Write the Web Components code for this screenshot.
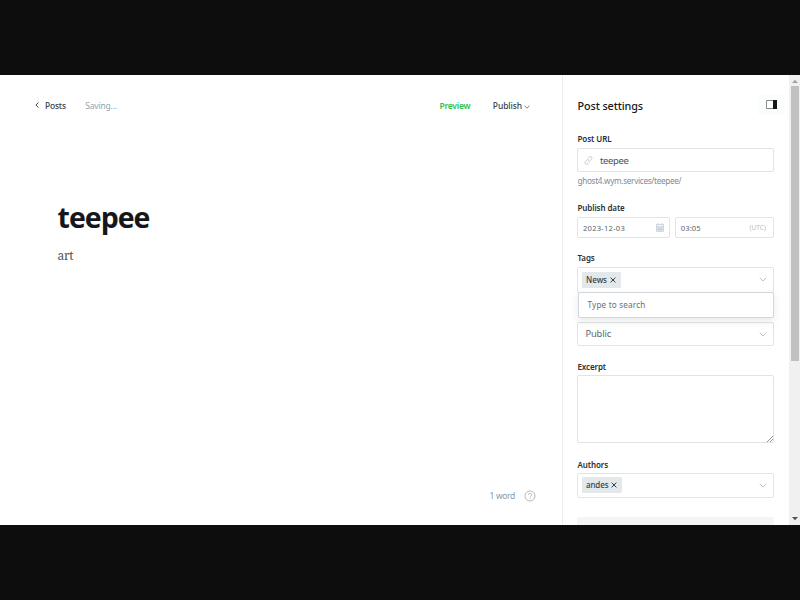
<!DOCTYPE html>
<html lang="en">
<head>
<meta charset="utf-8">
<title>Post editor</title>
<style>
html,body{margin:0;height:100%;background:#0d0d0d;overflow:hidden}
body{font-family:"Noto Sans","Open Sans",sans-serif;color:#394047}
</style>
</head>
<body>
<post-editor></post-editor>
<script>
const define = (name, html, Base = HTMLElement) => {
  const t = document.createElement('template');
  t.innerHTML = html;
  customElements.define(name, class extends Base {
    constructor() {
      super();
      this.attachShadow({mode: 'open'}).append(t.content.cloneNode(true));
    }
  });
};

/* Text run whose letter spacing is tuned so that it fills a given width. */
class FitText extends HTMLElement {
  connectedCallback() {
    if (this.shadowRoot) return;
    this.attachShadow({mode: 'open'}).innerHTML =
      '<style>:host{display:inline-block;white-space:nowrap;flex:none}span{display:inline-block}</style><span><slot></slot></span>';
    const w = Number(this.getAttribute('width'));
    const span = this.shadowRoot.querySelector('span');
    const natural = span.getBoundingClientRect().width;
    const n = this.textContent.length;
    if (natural && w) {
      span.style.letterSpacing = ((w - natural) / n) + 'px';
      this.style.width = w + 'px';
    }
  }
}

define('chevron-icon', `<style>:host{display:block;width:8px;height:5px;color:#b9c1c9}svg{display:block;width:100%;height:100%}</style>
<svg viewBox="0 0 8 5" fill="none" stroke="currentColor" stroke-width="1"><path d="M.8.7 4 4.1 7.2.7"/></svg>`);

define('form-label', `<style>:host{display:block;height:16px;font-size:8px;line-height:14px;font-weight:600;color:#2a2f35}</style><slot></slot>`);

define('input-box', `<style>
:host{display:flex;align-items:center;box-sizing:border-box;border:1px solid #e1e4e6;border-radius:2px;background:#fff;color:#4a525a;position:relative}
.grow{flex:1}
</style><slot></slot><div class="grow"></div><slot name="end"></slot>`);

define('token-chip', `<style>
:host{display:flex;align-items:center;gap:2.5px;box-sizing:border-box;height:16px;padding:0 5px 0 4px;background:#e3e8eb;border-radius:1.5px;font-size:8px;line-height:14px;font-weight:500;color:#394047}
svg{width:6px;height:6px;flex:none}
</style><slot></slot><svg viewBox="0 0 6 6" stroke="#394047" stroke-width="1"><path d="m.6.6 4.8 4.8m0-4.8L.6 5.4"/></svg>`);

define('scroll-bar', `<style>
:host{display:flex;flex-direction:column;align-items:center;width:11px;background:#f0f0f0}
svg{width:6px;height:4px;margin-top:4px}
.thumb{width:8px;height:275px;background:#c1c1c1;margin:3px 0 auto 1px}
svg:last-child{margin:0 0 4px}
</style><svg viewBox="0 0 6 4"><path d="M0 4 3 .7 6 4z" fill="#a3a3a3"/></svg><div class="thumb"></div><svg viewBox="0 0 6 4"><path d="M0 0h6L3 3.3z" fill="#505050"/></svg>`);

define('editor-canvas', `<style>
:host{display:flex;flex-direction:column;box-sizing:border-box;width:562px;height:450px;background:#fff;padding:20px 25px 20px 35px}
header{display:flex;align-items:center;height:21px;font-size:8.5px;color:#394047}
header svg{width:4px;height:6px;margin-right:6px;margin-top:-1px}
.saving{margin-left:19.5px;color:#95a1ad}
.preview{margin-left:auto;color:#2fbf55;font-weight:600}
.publish{margin-left:22.5px;font-weight:500}
header chevron-icon{width:6px;height:4px;margin:3px 7px 0 2px;color:#505961}
h1{margin:81px 0 0 22.5px;font:700 28.5px/40px "Open Sans","Noto Sans",sans-serif;color:#15171a}
p{margin:9px 0 0 22.5px;font:12px/20px "Noto Serif","Liberation Serif",serif;color:#4a525a}
footer{display:flex;align-items:center;justify-content:flex-end;margin-top:auto;height:19px;font-size:8.5px;color:#8b98a6}
footer svg{width:12px;height:12px;margin:0 1px 0 9px}
</style>
<header><svg viewBox="0 0 4 6" fill="none" stroke="#394047"><path d="M3.4.5.9 3l2.5 2.5"/></svg>
<fit-text width="20.8" style="font-weight:500">Posts</fit-text><fit-text class="saving" width="31.5">Saving...</fit-text>
<fit-text class="preview" width="30.8">Preview</fit-text><fit-text class="publish" width="29.2">Publish</fit-text><chevron-icon></chevron-icon></header>
<h1><fit-text width="92">teepee</fit-text></h1>
<p><fit-text width="15.5">art</fit-text></p>
<footer><fit-text width="25.5">1 word</fit-text><svg viewBox="0 0 12 12" fill="none" stroke="#9ba8b5" stroke-width=".8"><circle cx="6" cy="6" r="5"/><path d="M4.4 4.9a1.6 1.5 0 1 1 2.3 1.3Q6 6.5 6 7.2M6 8.1v.9"/></svg></footer>`);

define('settings-panel', `<style>
:host{display:flex;flex-direction:column;box-sizing:border-box;width:227px;height:450px;overflow:hidden;border-left:1px solid #eceeef;background:#fff;padding:20px 15px 0 14px}
header{display:flex;align-items:center;justify-content:space-between;height:20px;font-size:10.8px;color:#15171a;font-weight:500;padding-left:.5px;margin-right:-11px;flex:none}
.toggle{width:27px;height:20px;background:#fbfcfc;border-radius:2px;display:grid;place-items:center}
.toggle svg{width:11px;height:9px;margin-top:-1px}
form-label{padding-left:.5px;flex:none}
.url{height:24px;padding-left:6px;font-size:9.5px;flex:none}
.url svg{width:9px;height:9px;margin-right:7px}
.hint{font-size:8.2px;line-height:14px;height:14px;margin-top:2px;padding-left:.5px;color:#7c8b9a;flex:none}
.dates{display:flex;gap:5px;flex:none}
.dates input-box{height:21px;padding:0 5px;font-size:7.6px;color:#5b656f}
.date{width:93px}.time{width:99.5px}
.dates .utc{font-size:6.6px;color:#b8c0c8;margin-right:2px}
.cal{width:8px;height:9px;margin-right:-.5px}
.tokens{height:26px;padding:0 6px 0 4px;flex:none}
.tokens token-chip,.tokens chevron-icon{margin-top:-1px}
.list{position:absolute;left:0;right:-1px;top:24px;height:26px;box-sizing:border-box;border:1px solid #d2d7db;border-radius:2px;background:#fff;z-index:2;box-shadow:0 3px 10px rgba(0,0,0,.09);padding-left:8.5px;font-size:8.2px;line-height:24px;color:#656f79}
.select{height:24px;margin-top:29px;padding:0 6px 0 7.5px;font-size:9.3px;line-height:20px;color:#5d6771;flex:none}
.area{height:68px;flex:none}
.area svg{align-self:flex-end;width:6px;height:6px;margin:0}
.more{flex:none;height:12px;margin-top:19px;background:#f4f5f5;border-radius:2px 2px 0 0}
</style>
<header><fit-text width="65.5">Post settings</fit-text><div class="toggle"><svg viewBox="0 0 11 9"><path d="M.5.5h10v8H.5z" fill="#fff" stroke="#85898c"/><path d="M7 0h4v9H7z" fill="#15171a"/></svg></div></header>
<form-label style="margin-top:17px"><fit-text width="34">Post URL</fit-text></form-label>
<input-box class="url"><svg viewBox="0 0 9 9" fill="none" stroke="#b4bbc3" stroke-width=".75"><path d="m3.9 2.4 1.2-1.3a1.5 1.5 0 0 1 2.5 2L6.1 4.8a1.5 1.5 0 0 1-2 .2M5.1 6.6 3.9 7.8a1.5 1.5 0 0 1-2.6-2l1.6-1.7a1.5 1.5 0 0 1 2-.2"/></svg><fit-text width="28.5">teepee</fit-text></input-box>
<div class="hint"><fit-text width="103.8">ghost4.wym.services/teepee/</fit-text></div>
<form-label style="margin-top:13px"><fit-text width="47.2">Publish date</fit-text></form-label>
<div class="dates"><input-box class="date"><fit-text width="42">2023-12-03</fit-text><svg class="cal" slot="end" viewBox="0 0 8 9" fill="none" stroke="#bcc3cb" stroke-width=".7"><path d="M.5 1.4h7v7h-7zM.5 3.4h7M2 .2v2M6 .2v2M2.3 4v4M4 4v4M5.7 4v4M1 5.1h6M1 6.7h6"/></svg></input-box>
<input-box class="time"><fit-text width="20">03:05</fit-text><fit-text slot="end" class="utc" width="16.5">(UTC)</fit-text></input-box></div>
<form-label style="margin-top:13px"><fit-text width="17.2">Tags</fit-text></form-label>
<input-box class="tokens"><token-chip><fit-text width="21">News</fit-text></token-chip><chevron-icon slot="end"></chevron-icon><div class="list"><fit-text width="58">Type to search</fit-text></div></input-box>
<input-box class="select"><fit-text width="25.5">Public</fit-text><chevron-icon slot="end"></chevron-icon></input-box>
<form-label style="margin-top:13px;line-height:15px"><fit-text width="28.5">Excerpt</fit-text></form-label>
<input-box class="area"><svg slot="end" viewBox="0 0 6 6" stroke="#777" stroke-width=".8"><path d="m0 6 6-6M3 6l3-3"/></svg></input-box>
<form-label style="margin-top:14px;line-height:15px"><fit-text width="30.5">Authors</fit-text></form-label>
<input-box class="tokens" style="height:25px"><token-chip><fit-text width="22.5">andes</fit-text></token-chip><chevron-icon slot="end"></chevron-icon></input-box>
<div class="more"></div>`);

define('post-editor', `<style>:host{display:flex;width:800px;height:450px;margin-top:75px;overflow:hidden;background:#fff}</style>
<editor-canvas></editor-canvas><settings-panel></settings-panel><scroll-bar></scroll-bar>`);

customElements.define('fit-text', FitText);
</script>
</body>
</html>
